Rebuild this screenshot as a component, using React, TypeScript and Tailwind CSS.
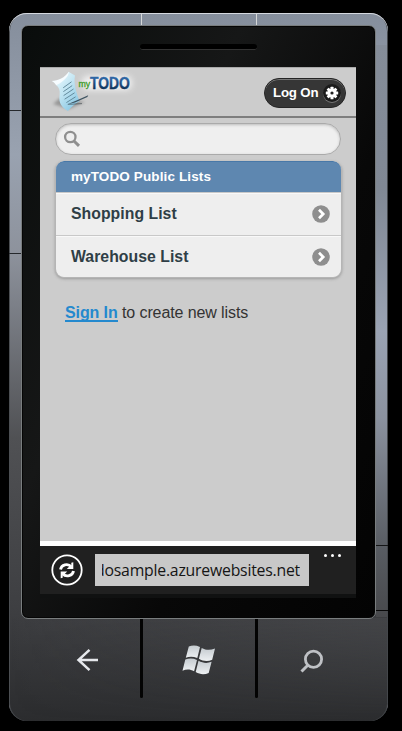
import React from "react";

function Logo() {
  return (
    <svg width="94" height="46" viewBox="0 0 94 46" className="block">
      <defs>
        <linearGradient id="paper" x1="0.2" y1="0" x2="0.9" y2="1">
          <stop offset="0" stopColor="#e6f7fd" />
          <stop offset="0.45" stopColor="#bce2f1" />
          <stop offset="1" stopColor="#80c2e0" />
        </linearGradient>
        <linearGradient id="word" x1="0" y1="0" x2="0" y2="1">
          <stop offset="0.2" stopColor="#2e67a5" />
          <stop offset="0.85" stopColor="#0b2c50" />
        </linearGradient>
        <filter id="halo" x="-30%" y="-60%" width="160%" height="220%">
          <feGaussianBlur stdDeviation="3" />
        </filter>
        <filter id="shade" x="-40%" y="-60%" width="180%" height="220%">
          <feGaussianBlur stdDeviation="1.8" />
        </filter>
      </defs>
      <rect x="31" y="7" width="50" height="14" rx="6" fill="#fff" opacity="0.75" filter="url(#halo)" />
      <path d="M2 35L9 29L34 33L18 40Z" fill="#555" opacity="0.45" filter="url(#shade)" />
      <path d="M5 16C11 13 15 8 17.5 2.8L24 6.4C22.5 14 25 23 28.6 32C25 34 21 37.5 17 42C11 38.5 7.2 34 8.6 26C9.2 21 8 18 5 16Z" fill="url(#paper)" />
      <path d="M0.6 12C7 12 14 8.5 17.8 2.8C18 7.5 12 13.2 5.2 16.2C4 14.5 2.6 13 0.6 12Z" fill="#f6fcff" />
      <path d="M12.2 18.8L20.5 12.8M12.4 22.6L21.2 16.6M12.6 26.6L22.5 20M13.6 30.2L23.6 23.8M15.4 33.6L24.6 27.8" stroke="#5f8799" strokeWidth="0.95" fill="none" />
      <path d="M16.5 35.3L26 31.2L37.2 26.2L36.4 28L24 33.6Z" fill="#3e5361" />
      <path d="M16.8 35.4L31 34.6" stroke="#29343b" strokeWidth="0.9" opacity="0.6" />
      <text x="27.5" y="17.5" fontFamily="Liberation Sans, sans-serif" fontSize="8.4" stroke="#3c9c28" strokeWidth="0.3" fill="#3c9c28" textLength="11.8" lengthAdjust="spacingAndGlyphs">my</text>
      <text x="39" y="20.3" fontFamily="Liberation Sans, sans-serif" fontWeight="bold" fontSize="16.8" fill="url(#word)" stroke="url(#word)" strokeWidth="0.4" textLength="39.8" lengthAdjust="spacingAndGlyphs">TODO</text>
    </svg>
  );
}

function Gear() {
  return (
    <span className="flex size-[18px] items-center justify-center rounded-full bg-[#1b1b1b] shadow-[0_1px_0_#777]">
      <svg width="14" height="14" viewBox="-7 -7 14 14">
        <g fill="#fff">
          <circle r="4.6" />
          {[0, 45, 90, 135].map((a) => (
            <rect key={a} x="-1.5" y="-6.2" width="3" height="12.4" rx="0.5" transform={`rotate(${a})`} />
          ))}
        </g>
        <circle r="1.6" fill="#222" />
      </svg>
    </span>
  );
}

function Row({ label }: { label: string }) {
  return (
    <li className="flex h-[42.5px] items-center justify-between border-t border-[#c8c8c8] pt-px pr-[11px] pl-[15px] shadow-[inset_0_1px_0_#f8f8f8]">
      <span className="text-[15.8px] leading-5 font-bold tracking-[0.03px] text-[#2f3e46]">{label}</span>
      <svg width="18" height="18" viewBox="0 0 18 18">
        <circle cx="9" cy="9" r="8.8" fill="#8e8e8e" />
        <path d="M7 4.8L11.2 9L7 13.2" fill="none" stroke="#fff" strokeWidth="2.7" />
      </svg>
    </li>
  );
}

function Screen() {
  return (
    <div className="ml-[18px] flex h-[531px] w-[316px] flex-col bg-[#cccccc]">
      <header className="flex h-[51px] shrink-0 items-start justify-between border-t border-b-2 border-t-[#aaa] border-b-[#7e7e7e] pr-[10px] pl-[11px]">
        <div className="pt-px"><Logo /></div>
        <button className="mt-[10px] flex h-[30px] w-[82px] items-center justify-between rounded-full border border-[#252525] bg-[#363636] pr-[4px] pl-[8px] shadow-[inset_0_1px_0_#777]">
          <span className="text-[13.3px] font-bold tracking-[-0.2px] text-white">Log On</span>
          <Gear />
        </button>
      </header>
      <main className="flex flex-1 flex-col px-[15px] pt-[5px]">
        <div className="flex h-[32px] shrink-0 items-center rounded-full border border-[#aaa] bg-[#efefef] pl-[7px] shadow-[inset_0_1px_3px_#bbb]">
          <svg width="18" height="18" viewBox="0 0 18 18" fill="none" stroke="#8f8f8f">
            <circle cx="7.3" cy="7" r="5.2" strokeWidth="2.3" />
            <path d="M11 11L16 15.8" strokeWidth="3" />
          </svg>
        </div>
        <ul className="mt-[6px] w-[287px] overflow-hidden rounded-[9px] border-x border-b border-[#b5b5b5] bg-[#eeeeee] shadow-[0_1px_3px_#999]">
          <li className="-mx-px flex h-[31px] items-center rounded-t-[9px] border border-b-0 border-[#4878a8] bg-[#5e87b0] pt-px pl-[15px] text-[13.5px] font-bold tracking-[0.12px] text-white">myTODO Public Lists</li>
          <Row label="Shopping List" />
          <Row label="Warehouse List" />
        </ul>
        <p className="mt-[25px] pl-[10px] text-[16px] leading-5 tracking-[-0.1px] text-[#333]">
          <a className="inline-block h-[19px] border-b-2 border-[#2489ce] leading-5 font-bold text-[#2489ce]">Sign In</a> to create new lists
        </p>
      </main>
      <div className="h-[5px] bg-white" />
      <footer className="flex h-[52px] shrink-0 items-start border-b-4 border-[#101111] bg-[#202020] pl-[11px]">
        <svg className="mt-[8px]" width="32" height="32" viewBox="0 0 32 32" fill="none" stroke="#fff">
          <circle cx="16" cy="16" r="14.7" strokeWidth="1.8" />
          <path d="M9.5 15.5C10.3 10.7 16.8 8.8 20.4 12.7M22.5 17C21.7 21.8 15.2 23.7 11.6 19.8" strokeWidth="2.8" />
          <path d="M22.3 8.2V15H15.8L18.5 12.3H20.3V8.8ZM9.7 24.2V17.5H16.2L13.5 20.2H11.7V23.7Z" fill="#fff" stroke="none" />
        </svg>
        <div className="mt-[8px] ml-[12px] flex h-[32px] w-[214px] items-center bg-[#c8c8c8] pr-[9px] pl-[7px]">
          <div className="flex w-full justify-end overflow-hidden">
            <span className="shrink-0 font-['Open_Sans','Noto_Sans',sans-serif] text-[15.8px] leading-6 tracking-[-0.22px] text-[#151515]">dosample.azurewebsites.net</span>
          </div>
        </div>
        <div className="mt-[8px] ml-[15px] flex gap-[4px]">
          <i className="size-[3px] rounded-full bg-white" />
          <i className="size-[3px] rounded-full bg-white" />
          <i className="size-[3px] rounded-full bg-white" />
        </div>
      </footer>
    </div>
  );
}

export default function App() {
  return (
    <div className="h-[731px] w-[402px] overflow-hidden bg-black pt-[13px] pl-[9px] font-['Liberation_Sans',Arial,sans-serif]">
      <div className="relative flex h-[708px] w-[379px] flex-col rounded-[18px] bg-[linear-gradient(180deg,#858e9c_0%,#99a2b0_20%,#8d929c_34%,#505154_60%,#3e3f42_84%,#2b2c2e_100%)] shadow-[inset_0_1px_0_#d5d9df,inset_1px_0_0_#4b4e52,inset_-1px_0_0_#44474b]">
        <div className="absolute top-[32px] right-[1px] h-[572px] w-[11px] bg-[linear-gradient(180deg,#858d99,#808894_25%,#9aa3b3_50%,#8b929f_65%,#585c62_88%,#48494c)]" />
        <div className="absolute right-px bottom-0 left-px h-[103px] rounded-b-[18px] bg-[linear-gradient(90deg,#3d3e4000,#4d4e5170)] [mask-image:linear-gradient(180deg,#000,transparent)]" />
        <i className="absolute top-[97px] left-0 h-px w-[13px] bg-[#25282c]" />
        <i className="absolute top-[240px] left-0 h-px w-[13px] bg-[#25282c]" />
        <i className="absolute top-[532px] right-0 h-px w-[13px] bg-[#151617]" />
        <i className="absolute top-[597px] right-0 h-px w-[13px] bg-[#080808]" />
        <i className="absolute top-[1px] left-[132px] h-[11px] w-px bg-[#d5d7d8]" />
        <i className="absolute top-[1px] left-[247px] h-[11px] w-px bg-[#d5d7d8]" />
        <div className="relative mt-[12px] ml-[12px] h-[594px] w-[355px] shrink-0 rounded-[7px] border border-[#797d7e] bg-[linear-gradient(115deg,#090c0b,#161717_35%,#080808_65%,#030303)] shadow-[inset_0_0_0_1px_#050505]">
          <div className="flex h-[41px] justify-center pt-[18px]">
            <div className="h-[6px] w-[117px] rounded-full border-b border-[#333] bg-black" />
          </div>
          <Screen />
        </div>
        <nav className="relative grid h-[102px] grid-cols-[131px_115px_1fr]">
          <div className="pt-[29px] pl-[67px]">
            <svg width="23" height="24" viewBox="0 0 23 24" fill="none" stroke="#e6e8ec" strokeWidth="2.5">
              <path d="M22 12H2M13.5 1.8L2.5 12L13.5 22.2" />
            </svg>
          </div>
          <div className="relative pt-[24px] pl-[42px]">
            <i className="absolute top-0 left-0 h-[79px] w-[3px] rounded-b-sm bg-[#030303]" />
            <svg width="35" height="36" viewBox="0 0 35 36">
              <defs>
                <linearGradient id="flag" x1="0" y1="0" x2="0" y2="1"><stop stopColor="#c5cbd0" /><stop offset="1" stopColor="#edf0f2" /></linearGradient>
              </defs>
              <g fill="url(#flag)">
                <path d="M6.8 3.6C10 2.1 14 2.1 18 3.9L15.3 15C11 13.3 7 13.4 3.8 14.8Z" />
                <path d="M19.7 4.9C24 7.3 28 7.4 33 5.6L30.2 16.8C25.8 18.8 21 18.3 16.9 15.8Z" />
                <path d="M3.3 16.6C7 15.1 11 15.2 15 16.9L12.1 28.3C8 25.9 4 26.2 0.5 27.8Z" />
                <path d="M16.5 17.8C21 20.2 25 20.6 29.6 18.8L26.7 30C22.5 31.8 18 31.7 13.7 29.1Z" />
              </g>
            </svg>
          </div>
          <div className="relative pt-[30px] pl-[45px]">
            <i className="absolute top-0 left-0 h-[79px] w-[3px] rounded-b-sm bg-[#030303]" />
            <svg width="24" height="25" viewBox="0 0 24 25" fill="none" stroke="#bfc1c5">
              <circle cx="13.5" cy="10.3" r="8.1" strokeWidth="2.8" />
              <path d="M7.8 16.2L1.5 22.5" strokeWidth="3" />
            </svg>
          </div>
        </nav>
      </div>
    </div>
  );
}
